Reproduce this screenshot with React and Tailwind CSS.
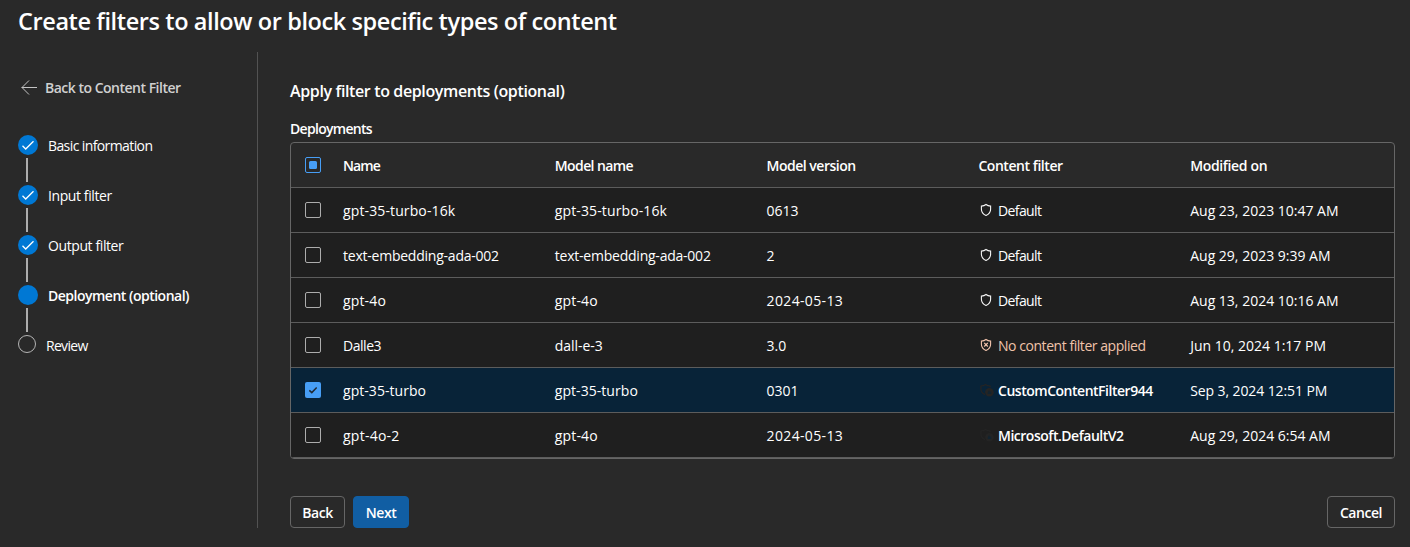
import React from "react";

const steps = [
  { label: "Basic information", state: "done", track: "tracking-[-0.6px]" },
  { label: "Input filter", state: "done", track: "tracking-[-0.4px]" },
  { label: "Output filter", state: "done", track: "tracking-[-0.4px]" },
  { label: "Deployment (optional)", state: "current", track: "tracking-[-0.5px]" },
  { label: "Review", state: "todo", track: "tracking-[-0.7px]" },
];

const columns = [
  { label: "Name", track: "tracking-[-0.9px]" },
  { label: "Model name", track: "tracking-[-0.6px]" },
  { label: "Model version", track: "tracking-[-0.5px]" },
  { label: "Content filter", track: "tracking-[-0.45px]" },
  { label: "Modified on", track: "tracking-[-0.35px]" },
];

const rows = [
  { name: "gpt-35-turbo-16k", track: "tracking-[0.12px]", model: "gpt-35-turbo-16k", modelTrack: "tracking-[0.12px]", version: "0613", filter: "Default", kind: "default", date: "Aug 23, 2023 10:47 AM" },
  { name: "text-embedding-ada-002", track: "tracking-[-0.23px]", model: "text-embedding-ada-002", modelTrack: "tracking-[-0.23px]", version: "2", filter: "Default", kind: "default", date: "Aug 29, 2023 9:39 AM" },
  { name: "gpt-4o", track: "tracking-[0.15px]", model: "gpt-4o", modelTrack: "tracking-[0.15px]", version: "2024-05-13", filter: "Default", kind: "default", date: "Aug 13, 2024 10:16 AM" },
  { name: "Dalle3", track: "tracking-[-0.45px]", model: "dall-e-3", modelTrack: "tracking-[-0.05px]", version: "3.0", filter: "No content filter applied", kind: "none", date: "Jun 10, 2024 1:17 PM" },
  { name: "gpt-35-turbo", track: "tracking-[0.05px]", model: "gpt-35-turbo", modelTrack: "tracking-[0.05px]", version: "0301", filter: "CustomContentFilter944", kind: "custom", date: "Sep 3, 2024 12:51 PM", dateTrack: "tracking-[-0.1px]", selected: true },
  { name: "gpt-4o-2", track: "tracking-[0.25px]", model: "gpt-4o", modelTrack: "tracking-[0.15px]", version: "2024-05-13", filter: "Microsoft.DefaultV2", kind: "custom", date: "Aug 29, 2024 6:54 AM" },
];

const filterStyles = {
  default: "tracking-[-0.6px]",
  none: "tracking-[-0.45px] text-[#f0c3aa]",
  custom: "font-semibold tracking-[-0.48px]",
};

function StepMarker({ state }) {
  if (state === "todo") {
    return <span className="-mt-0.5 size-[18px] shrink-0 rounded-full border border-[#b5b5b5]" />;
  }
  return (
    <span className="flex size-5 shrink-0 items-center justify-center rounded-full bg-[#0078d4]">
      {state === "done" && (
        <svg width="20" height="20" viewBox="0 0 20 20" fill="none">
          <path d="M4.5 10.8 7.7 14 15.5 6.2" stroke="#fff" strokeWidth="1.3" />
        </svg>
      )}
    </span>
  );
}

const SHIELD = "M6 1.5C7.3 2.5 8.9 3 10.6 3.1V6.3C10.6 9 9 11.2 6 12.5C3 11.2 1.4 9 1.4 6.3V3.1C3.1 3 4.7 2.5 6 1.5Z";

function FilterIcon({ kind }) {
  if (kind === "custom") {
    return (
      <svg width="14" height="14" viewBox="0 0 14 14" fill="none" className="shrink-0">
        <path d="M5 11.6C2.4 10.3 .9 8.8 .9 6.3V3C2.6 2.9 4.2 2.4 5.5 1.4C6.8 2.4 8.4 2.9 10.1 3V4.2" stroke="#242424" strokeWidth="1.2" />
        <circle cx="9.4" cy="9.3" r="4.3" fill="#242424" />
        <path d="M7.8 9.2 9.3 6.8V8.4H11.2V11H7.8Z" fill="#12232f" />
      </svg>
    );
  }
  const color = kind === "none" ? "#f4c4ac" : "#f5f5f5";
  return (
    <svg width="14" height="14" viewBox="0 0 14 14" fill="none" stroke={color} className="shrink-0">
      <path d={SHIELD} strokeWidth="1.1" />
      {kind === "none" && <path d="M4.2 4.9 7.8 8.5M7.8 4.9 4.2 8.5" strokeWidth="1.2" />}
    </svg>
  );
}

function Checkbox({ state }) {
  if (state === "checked") {
    return (
      <span className="flex size-4 items-center justify-center rounded-xs bg-[#479ef5]">
        <svg width="16" height="16" viewBox="0 0 16 16" fill="none">
          <path d="M4.3 8.4 6.8 10.6 11.7 5.6" stroke="#1f2a35" strokeWidth="1.5" />
        </svg>
      </span>
    );
  }
  if (state === "mixed") {
    return (
      <span className="flex size-4 items-center justify-center rounded-xs border border-[#479ef5]">
        <span className="size-2 rounded-[1.5px] bg-[#479ef5]" />
      </span>
    );
  }
  return <span className="size-4 rounded-xs border border-[#adadad]" />;
}

function Row({ children, className }) {
  return (
    <div className={`grid h-[45px] grid-cols-[44px_repeat(5,minmax(0,1fr))] border-b border-[#5c5c5c] whitespace-nowrap ${className}`}>
      {children}
    </div>
  );
}

function Cell({ children, className = "" }) {
  return <div className={`flex items-center pt-0.5 pl-2 ${className}`}>{children}</div>;
}

function Button({ children, className }) {
  return (
    <button className={`flex h-8 items-center justify-center rounded-sm border pt-0.5 font-semibold tracking-[-0.45px] text-white ${className}`}>
      {children}
    </button>
  );
}

export default function App() {
  return (
    <div className="flex h-[547px] w-[1410px] flex-col overflow-hidden bg-[#292929] font-['Open_Sans','Noto_Sans',sans-serif] text-[14px] leading-5 text-white">
      <h1 className="h-[52px] pt-[5px] pl-[18px] text-[23.5px] leading-8 font-semibold tracking-[-0.4px] whitespace-nowrap">
        Create filters to allow or block specific types of content
      </h1>
      <div className="flex h-[476px]">
        <aside className="w-[258px] shrink-0 border-r border-[#525252] pl-[18px]">
          <a className="mt-[26px] flex h-5 items-center gap-2 pl-[3px] text-[#d0d0d0]">
            <svg width="16" height="16" viewBox="0 0 16 16" fill="none" stroke="#c4c4c4" className="-mt-0.5">
              <path d="M16 8.5H.7M8 1.5 1 8.5 8 15.5" />
            </svg>
            <span className="font-semibold tracking-[-0.5px] whitespace-nowrap">Back to Content Filter</span>
          </a>
          <ol className="mt-[37px]">
            {steps.map((s, i) => (
              <li key={s.label} className="h-[50px]">
                <div className="flex h-5 items-center gap-2.5">
                  <StepMarker state={s.state} />
                  <span className={`pt-0.5 whitespace-nowrap ${s.track} ${s.state === "current" ? "font-semibold" : ""}`}>{s.label}</span>
                </div>
                {i < steps.length - 1 && <div className="mt-[3px] ml-2 h-6 w-0.5 bg-[#adadad]" />}
              </li>
            ))}
          </ol>
        </aside>
        <main className="flex w-[1137px] flex-col pl-8">
          <h2 className="mt-7 text-[16px] leading-[22px] font-semibold tracking-[-0.37px]">Apply filter to deployments (optional)</h2>
          <div className="mt-[17px] h-[23px] font-semibold tracking-[-0.7px]">Deployments</div>
          <div className="overflow-hidden rounded-sm border border-[#666666]">
            <Row className="font-semibold">
              <div className="flex items-center pl-3.5"><Checkbox state="mixed" /></div>
              {columns.map((c) => <Cell key={c.label} className={c.track}>{c.label}</Cell>)}
            </Row>
            {rows.map((r) => (
              <Row key={r.name} className={r.selected ? "bg-[#082338]" : "bg-[#1f1f1f]"}>
                <div className="flex items-center pl-3.5"><Checkbox state={r.selected ? "checked" : "empty"} /></div>
                <Cell className={r.track}>{r.name}</Cell>
                <Cell className={r.modelTrack}>{r.model}</Cell>
                <Cell className={r.version.length > 4 ? "tracking-[0.35px]" : ""}>{r.version}</Cell>
                <Cell className="gap-[3.6px]">
                  <span className="-mt-0.5 ml-0.5 flex"><FilterIcon kind={r.kind} /></span>
                  <span className={filterStyles[r.kind]}>{r.filter}</span>
                </Cell>
                <Cell className={r.dateTrack}>{r.date}</Cell>
              </Row>
            ))}
          </div>
          <div className="mt-[37px] flex gap-2">
            <Button className="w-[55px] border-[#666666]">Back</Button>
            <Button className="w-14 border-[#115ea3] bg-[#115ea3]">Next</Button>
            <Button className="ml-auto w-[68px] border-[#666666]">Cancel</Button>
          </div>
        </main>
      </div>
    </div>
  );
}
